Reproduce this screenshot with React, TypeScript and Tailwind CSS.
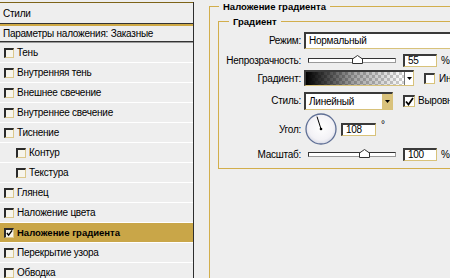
const gold = "border-[#d2ae4c]";

type Item = { label: string; indent?: boolean; checked?: boolean; active?: boolean };

const items: Item[] = [
  { label: "Тень" },
  { label: "Внутренняя тень" },
  { label: "Внешнее свечение" },
  { label: "Внутреннее свечение" },
  { label: "Тиснение" },
  { label: "Контур", indent: true },
  { label: "Текстура", indent: true },
  { label: "Глянец" },
  { label: "Наложение цвета" },
  { label: "Наложение градиента", checked: true, active: true },
  { label: "Перекрытие узора" },
  { label: "Обводка" },
];

const inset =
  "border-t-2 border-l-2 border-r border-b border-t-[#3a3a3a] border-l-[#3a3a3a] border-r-[#d8c27a] border-b-[#d8c27a]";

function Check({ checked }: { checked?: boolean }) {
  return (
    <span className="flex h-[10px] w-[10px] shrink-0 items-center justify-center border-t-2 border-l-2 border-r border-b border-t-[#2a2a2a] border-l-[#2a2a2a] border-r-[#dcc88c] border-b-[#dcc88c] bg-[#f7f5ec]">
      {checked && (
        <svg width="8" height="8" viewBox="0 0 8 8">
          <path d="M1 4 L3 6.5 L7 1" fill="none" stroke="#000" strokeWidth="1.6" />
        </svg>
      )}
    </span>
  );
}

function Box({ children, className = "" }: { children?: React.ReactNode; className?: string }) {
  return (
    <div className={`flex shrink-0 items-center whitespace-nowrap bg-white pl-[3px] ${inset} ${className}`}>
      {children}
    </div>
  );
}

function Slider({ pos }: { pos: number }) {
  return (
    <div className="relative ml-[7px] h-[5px] w-[88px] shrink-0 border border-t-[#333] border-l-[#333] border-r-[#999] border-b-[#999] bg-white">
      <svg
        className="absolute top-[-4px]"
        style={{ left: pos - 5 }}
        width="11"
        height="9"
        viewBox="0 0 11 9"
      >
        <path d="M0.5 8.5 V4 L5.5 0.5 L10.5 4 V8.5 Z" fill="#fff" stroke="#333" strokeWidth="1" />
      </svg>
    </div>
  );
}

function Label({ children }: { children: React.ReactNode }) {
  return <div className="w-[82px] shrink-0 whitespace-nowrap text-right">{children}</div>;
}

function Arrow() {
  return (
    <svg width="5" height="3" viewBox="0 0 5 3">
      <path d="M0 0 H5 L2.5 3 Z" fill="#000" />
    </svg>
  );
}

export default function App() {
  return (
    <div className="flex h-[278px] w-[450px] items-start overflow-hidden bg-[#eeeeee] font-['Liberation_Sans',Arial,sans-serif] text-[10px] leading-[13px] tracking-[-0.25px] text-black">
      <div className="mt-[2px] flex h-[276px] w-[194px] shrink-0 flex-col overflow-hidden border-r border-r-[#2e2e2e]">
        <div className="flex h-[22px] shrink-0 items-center border-t border-b border-t-[#7d6318] border-b-[#333] pl-[3px]">
          Стили
        </div>
        <div className="h-[2px] shrink-0 bg-[#cfa945]" />
        <div className="flex h-[15px] shrink-0 items-center whitespace-nowrap pl-[3px]">
          Параметры наложения: Заказные
        </div>
        <div className="h-px shrink-0 bg-[#333]" />
        <div className="h-px shrink-0 bg-[#9a9a9a]" />
        {items.map((it) => (
          <div
            key={it.label}
            className={`flex h-[20px] shrink-0 items-center gap-[3px] whitespace-nowrap border-b border-white ${
              it.indent ? "pl-[16px]" : "pl-[4px]"
            } ${it.active ? "bg-[#c9a648] text-[9.5px] font-bold tracking-normal" : ""}`}
          >
            <Check checked={it.checked} />
            <span>{it.label}</span>
          </div>
        ))}
      </div>

      <fieldset className={`ml-[15px] h-[300px] w-[330px] min-w-0 shrink-0 border ${gold}`}>
        <legend className="ml-[9px] px-[4px] text-[9.5px] font-bold leading-[13px] tracking-normal">
          Наложение градиента
        </legend>
        <fieldset className={`ml-[8px] mt-[2px] w-[310px] min-w-0 border ${gold} pb-[6px]`}>
          <legend className="ml-[10px] px-[4px] text-[9.5px] font-bold leading-[13px] tracking-normal">
            Градиент
          </legend>

          <div className="mt-[3px] flex h-[18px] items-center">
            <Label>Режим:</Label>
            <Box className="ml-[3px] h-[17px] w-[170px]">Нормальный</Box>
          </div>

          <div className="mt-[1px] flex h-[20px] items-center">
            <Label>Непрозрачность:</Label>
            <Slider pos={48} />
            <Box className="ml-[7px] h-[13px] w-[34px]">55</Box>
            <span className="ml-[4px]">%</span>
          </div>

          <div className="flex h-[16px] items-center">
            <Label>Градиент:</Label>
            <div className={`ml-[3px] flex h-[16px] w-[110px] shrink-0 ${inset}`}>
              <div className="h-full flex-1 bg-[repeating-conic-gradient(#cdcdcd_0%_25%,#ffffff_0%_50%)] bg-[length:6px_6px]">
                <div className="h-full w-full bg-linear-to-r from-black via-[rgba(0,0,0,0.35)] to-transparent" />
              </div>
              <div className="flex w-[9px] items-center justify-center border-l border-l-[#777] bg-white">
                <Arrow />
              </div>
            </div>
            <span className={`ml-[10px] h-[11px] w-[11px] shrink-0 bg-white ${inset}`} />
            <span className="ml-[4px] whitespace-nowrap">Инвертировать</span>
          </div>

          <div className="mt-[5px] flex h-[19px] items-center">
            <Label>Стиль:</Label>
            <div className={`ml-[3px] flex h-[18px] w-[89px] shrink-0 bg-white ${inset}`}>
              <div className="flex flex-1 items-center whitespace-nowrap pl-[3px]">Линейный</div>
              <div className="flex w-[10px] items-center justify-center bg-[#d9c27c]">
                <Arrow />
              </div>
            </div>
            <span className={`ml-[10px] flex h-[12px] w-[12px] shrink-0 items-center justify-center bg-white ${inset}`}>
              <svg width="9" height="9" viewBox="0 0 9 9">
                <path d="M1 4.5 L3.5 7.5 L8 1" fill="none" stroke="#000" strokeWidth="1.8" />
              </svg>
            </span>
            <span className="ml-[3px] whitespace-nowrap">Выровнять с слоем</span>
          </div>

          <div className="mt-[2px] flex h-[34px] items-center">
            <Label>Угол:</Label>
            <svg className="ml-[4px] shrink-0" width="32" height="32" viewBox="0 0 32 32">
              <defs>
                <radialGradient id="dial" cx="50%" cy="45%" r="55%">
                  <stop offset="0%" stopColor="#ffffff" />
                  <stop offset="75%" stopColor="#f3f2f6" />
                  <stop offset="100%" stopColor="#d9dbe6" />
                </radialGradient>
              </defs>
              <circle cx="16" cy="16" r="15" fill="url(#dial)" stroke="#5f6f95" strokeWidth="1.3" />
              <line x1="16" y1="16" x2="12" y2="3.6" stroke="#000" strokeWidth="1" />
              <circle cx="16" cy="16" r="1.3" fill="#000" />
            </svg>
            <Box className="ml-[4px] h-[13px] w-[35px]">108</Box>
            <span className="ml-[5px] self-start pt-[6px]">°</span>
          </div>

          <div className="flex h-[16px] items-center">
            <Label>Масштаб:</Label>
            <Slider pos={55} />
            <Box className="ml-[7px] h-[13px] w-[34px]">100</Box>
            <span className="ml-[4px]">%</span>
          </div>
        </fieldset>
      </fieldset>
    </div>
  );
}
